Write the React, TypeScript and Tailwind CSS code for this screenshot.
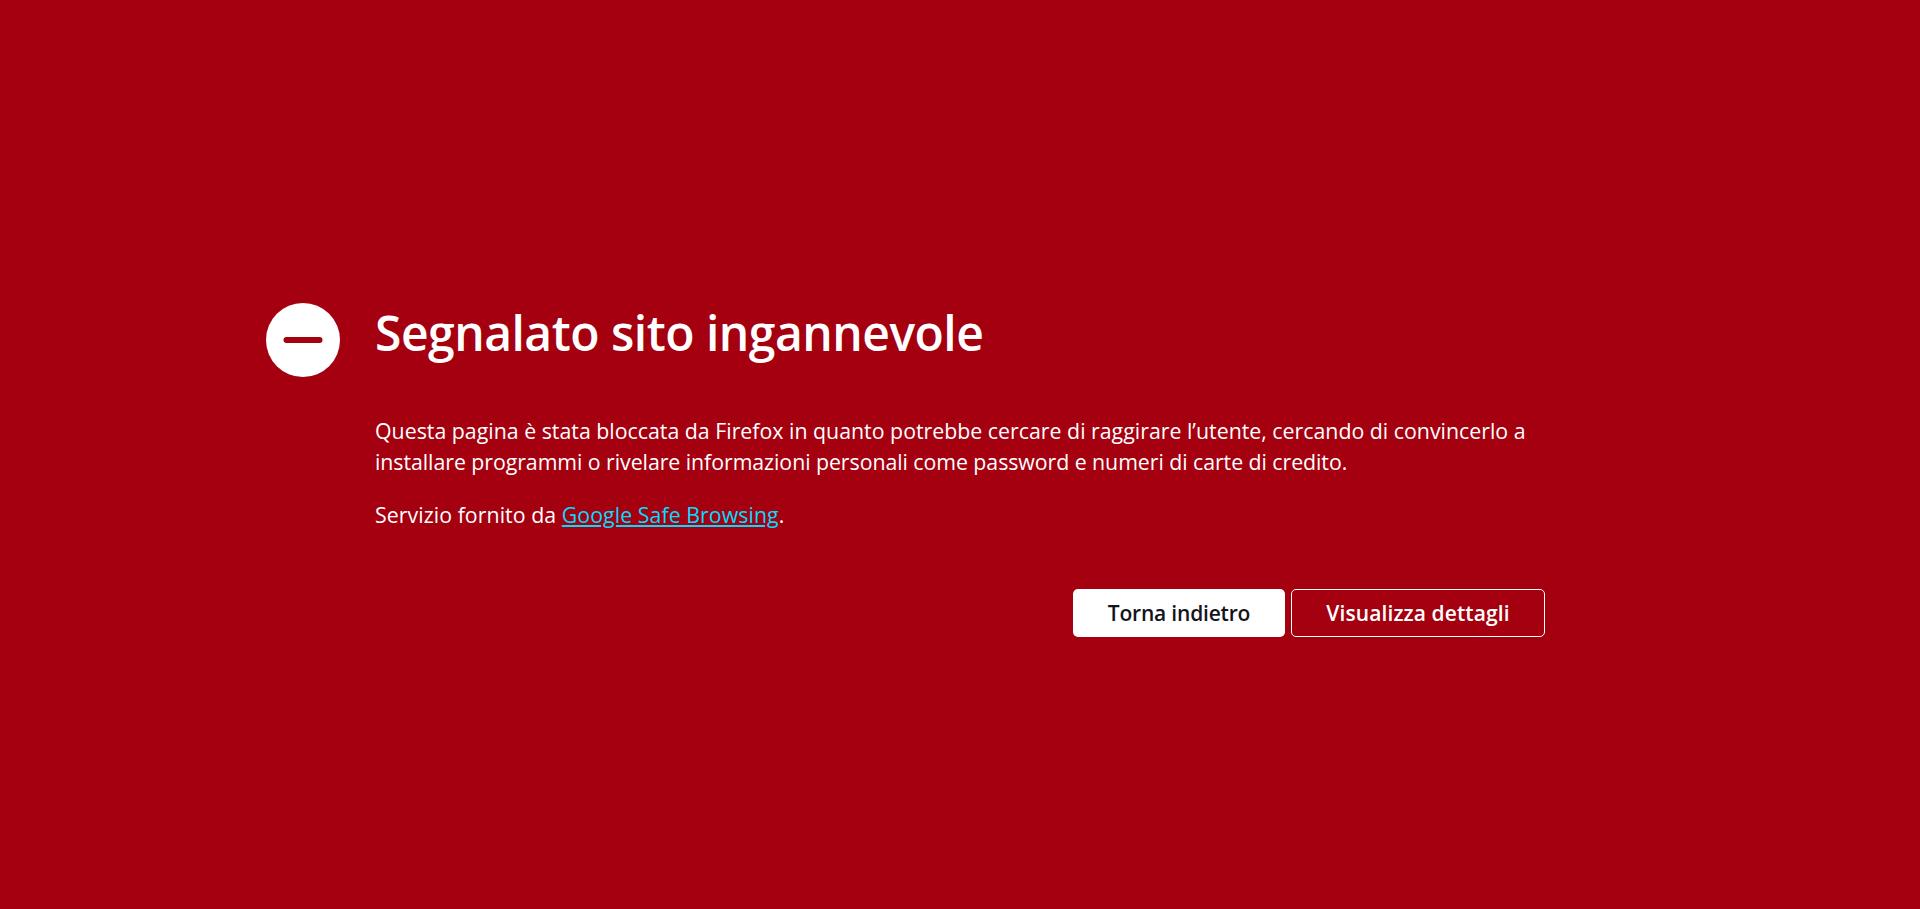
function BlockedIcon() {
  return (
    <svg width="74" height="74" viewBox="0 0 74 74" className="shrink-0">
      <circle cx="37" cy="37" r="37" fill="#ffffff" />
      <rect x="17.5" y="34" width="39" height="6" rx="3" fill="#a4000f" />
    </svg>
  );
}

function App() {
  return (
    <div className="min-h-[909px] bg-[#a4000f] pt-[303px] pl-[266px] font-['Open_Sans',sans-serif] text-white">
      <div className="flex w-[1279px] gap-[35px]">
        <BlockedIcon />
        <div className="flex-1">
          <h1 className="mt-[-2px] text-[48px] leading-[64px] font-semibold tracking-[-0.5px]">
            Segnalato sito ingannevole
          </h1>
          <p className="mt-[50px] text-[21.33px] leading-[31px]">
            Questa pagina è stata bloccata da Firefox in quanto potrebbe cercare di raggirare l’utente, cercando di convincerlo a
            <br />
            <span className="tracking-[-0.06px]">
              installare programmi o rivelare informazioni personali come password e numeri di carte di credito.
            </span>
          </p>
          <p className="mt-[22px] text-[21.33px] leading-[31px] tracking-[0.05px]">
            Servizio fornito da <a className="text-[#00ddff] underline">Google Safe Browsing</a>.
          </p>
          <div className="mt-[59px] flex justify-end gap-[6px]">
            <button className="h-[48px] w-[212px] rounded-[5px] bg-white pt-[2px] text-[21px] font-semibold tracking-[-0.2px] text-[#15141a]">
              Torna indietro
            </button>
            <button className="h-[48px] w-[254px] rounded-[5px] border border-white pt-[2px] text-[21px] font-semibold tracking-[0.1px] text-white">
              Visualizza dettagli
            </button>
          </div>
        </div>
      </div>
    </div>
  );
}

export default App;
